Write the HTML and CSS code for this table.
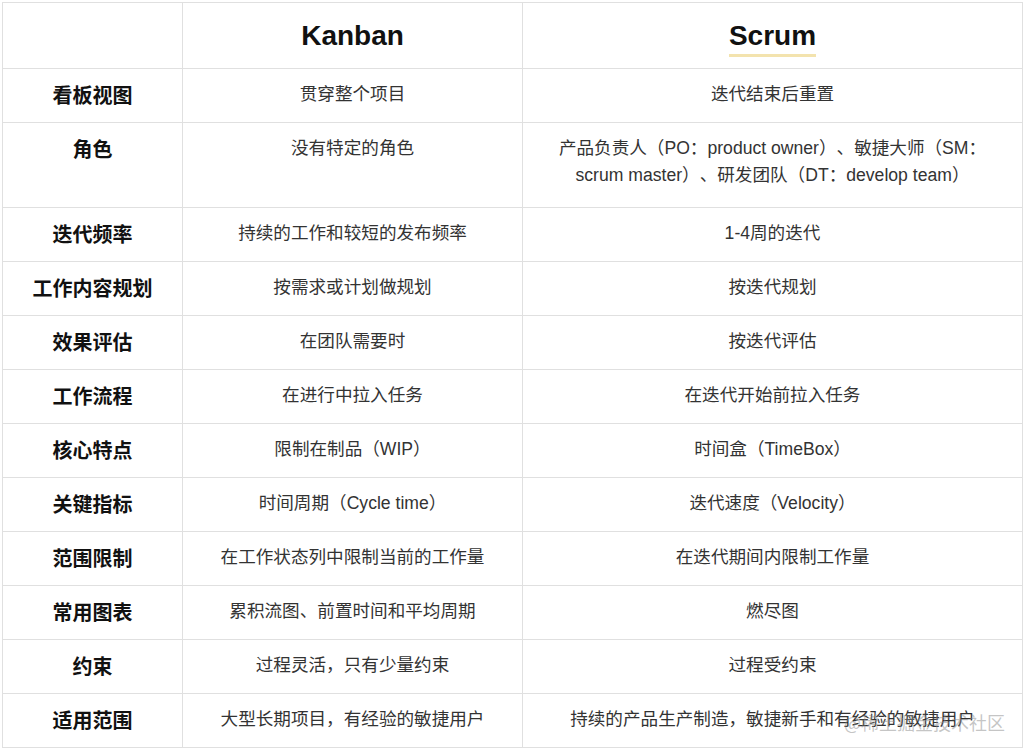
FILE: index.html
```html
<!DOCTYPE html>
<html lang="zh-CN">
<head>
<meta charset="utf-8">
<title>Kanban vs Scrum</title>
<link rel="stylesheet" href="styles.css">
</head>
<body>
<div class="page">
  <table class="compare">
    <colgroup>
      <col class="c-label">
      <col class="c-kanban">
      <col class="c-scrum">
    </colgroup>
    <thead>
      <tr class="head-row">
        <th></th>
        <th><span class="title">Kanban</span></th>
        <th><span class="title title-mark">Scrum</span></th>
      </tr>
    </thead>
    <tbody>
      <tr><td class="label">看板视图</td><td>贯穿整个项目</td><td>迭代结束后重置</td></tr>
      <tr class="tall"><td class="label">角色</td><td>没有特定的角色</td><td>产品负责人（PO：product owner）、敏捷大师（SM：<br>scrum master）、研发团队（DT：develop team）</td></tr>
      <tr><td class="label">迭代频率</td><td>持续的工作和较短的发布频率</td><td>1-4周的迭代</td></tr>
      <tr><td class="label">工作内容规划</td><td>按需求或计划做规划</td><td>按迭代规划</td></tr>
      <tr><td class="label">效果评估</td><td>在团队需要时</td><td>按迭代评估</td></tr>
      <tr><td class="label">工作流程</td><td>在进行中拉入任务</td><td>在迭代开始前拉入任务</td></tr>
      <tr><td class="label">核心特点</td><td>限制在制品（WIP）</td><td>时间盒（TimeBox）</td></tr>
      <tr><td class="label">关键指标</td><td>时间周期（Cycle time）</td><td>迭代速度（Velocity）</td></tr>
      <tr><td class="label">范围限制</td><td>在工作状态列中限制当前的工作量</td><td>在迭代期间内限制工作量</td></tr>
      <tr><td class="label">常用图表</td><td>累积流图、前置时间和平均周期</td><td>燃尽图</td></tr>
      <tr><td class="label">约束</td><td>过程灵活，只有少量约束</td><td>过程受约束</td></tr>
      <tr><td class="label">适用范围</td><td>大型长期项目，有经验的敏捷用户</td><td>持续的产品生产制造，敏捷新手和有经验的敏捷用户</td></tr>
    </tbody>
  </table>
  <div class="watermark">@稀土掘金技术社区</div>
</div>
</body>
</html>
```

FILE: styles.css
```css
html, body {
  margin: 0;
  padding: 0;
  background: #ffffff;
}

body {
  font-family: "Liberation Sans", "Noto Sans CJK SC", sans-serif;
  color: #333333;
  text-spacing-trim: space-all;
}

.page {
  position: relative;
  width: 1026px;
  height: 756px;
  overflow: hidden;
}

.compare {
  margin: 2px 0 0 2px;
  width: 1020px;
  border-collapse: collapse;
  table-layout: fixed;
}

.c-label { width: 180px; }
.c-kanban { width: 340px; }
.c-scrum { width: 500px; }

.compare th,
.compare td {
  border: 1px solid #e0e0e0;
  text-align: center;
  vertical-align: top;
  padding: 12px 6px 0;
  box-sizing: border-box;
}

.compare td {
  height: 54px;
  font-size: 17.6px;
  line-height: 27px;
  color: #333333;
}

.compare tr.tall td {
  height: 85px;
}

.compare td.label {
  font-size: 20px;
  font-weight: 700;
  line-height: 30px;
  padding-top: 12px;
  color: #111111;
}

.head-row th {
  height: 66px;
  padding: 17px 8px 0;
  vertical-align: top;
}

.title {
  display: inline-block;
  font-family: "Liberation Sans", sans-serif;
  font-size: 28px;
  font-weight: 700;
  line-height: 32px;
  color: #111111;
  padding-bottom: 2px;
  border-bottom: 3px solid transparent;
}

.title-mark {
  border-bottom-color: #f3e3ae;
}

.watermark {
  position: absolute;
  left: 844px;
  top: 709px;
  font-family: "Noto Sans CJK SC", sans-serif;
  font-size: 18px;
  line-height: 26px;
  color: rgba(140, 140, 140, 0.5);
  white-space: nowrap;
}
```
